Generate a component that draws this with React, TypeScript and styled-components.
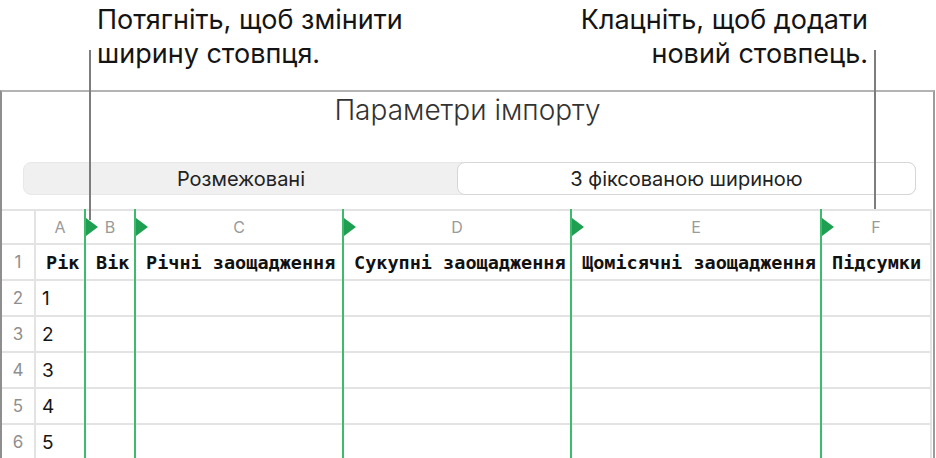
import React from 'react';
import styled, {createGlobalStyle} from "styled-components";

const GlobalStyle = createGlobalStyle`
    html, body {
        margin: 0;
        padding: 0;
        background: #ffffff;
    }
    body {
        font-family: Inter, "Noto Sans", sans-serif;
        color: #1b1b1b;
    }
`

const columns = [
    {letter: 'A', width: 48, title: 'Рік'},
    {letter: 'B', width: 48, title: 'Вік'},
    {letter: 'C', width: 206, title: 'Річні заощадження'},
    {letter: 'D', width: 226, title: 'Сукупні заощадження'},
    {letter: 'E', width: 248, title: 'Щомісячні заощадження'},
    {letter: 'F', width: 0, title: 'Підсумки'},
];
const numWidth = 32;
const lineWidth = 2;
const values = ['1', '2', '3', '4', '5'];

// x of each column break (relative to the sheet), where a green marker sits
const breaks: number[] = [];
{
    let x = numWidth + lineWidth;
    columns.slice(0, 5).forEach(c => {
        x += c.width;
        breaks.push(x);
        x += lineWidth;
    });
}

const App = () => {
    return (
        <SPage>
            <GlobalStyle/>
            <SCallouts>
                <SCallout>Потягніть, щоб змінити<br/>ширину стовпця.</SCallout>
                <SCallout $right>Клацніть, щоб додати<br/>новий стовпець.</SCallout>
            </SCallouts>
            <SPanel>
                <STitle>Параметри імпорту</STitle>
                <SSegmented>
                    <SSegment>Розмежовані</SSegment>
                    <SSegment $active>З фіксованою шириною</SSegment>
                </SSegmented>
                <SSheetWrap>
                    <SSheet $cols={`${numWidth}px ${columns.slice(0, 5).map(c => c.width + 'px').join(' ')} 1fr`}>
                        <SCorner/>
                        {columns.map(c => <SColHead key={c.letter}>{c.letter}</SColHead>)}
                        <SRowNum>1</SRowNum>
                        {columns.map(c => <SHeadCell key={c.letter}>{c.title}</SHeadCell>)}
                        {values.map((v, i) => (
                            <React.Fragment key={v}>
                                <SRowNum>{i + 2}</SRowNum>
                                <SCell>{v}</SCell>
                                {columns.slice(1).map(c => <SCell key={c.letter}/>)}
                            </React.Fragment>
                        ))}
                    </SSheet>
                    {breaks.map(x => <SMarker key={x} style={{left: x}}/>)}
                </SSheetWrap>
            </SPanel>
            <SLeader style={{left: 89, top: 50, height: 170}}/>
            <SLeader style={{left: 874, top: 50, height: 159}}/>
        </SPage>
    )
}
export default App;

const SPage = styled.div`
    position: relative;
    width: 936px;
    height: 458px;
    overflow: hidden;
`
const SCallouts = styled.div`
    display: flex;
    justify-content: space-between;
    height: 90px;
    padding: 3px 68px 0 97px;
    box-sizing: border-box;
`
const SCallout = styled.div<{ $right?: boolean }>`
    font-size: 27px;
    line-height: 34px;
    color: #141414;
    text-align: ${p => p.$right ? 'right' : 'left'};
`
const SPanel = styled.div`
    width: 935px;
    box-sizing: border-box;
    border-top: 2px solid #b3b3b3;
    border-left: 2px solid #8e8e8e;
    border-right: 2px solid #9c9c9c;
`
const STitle = styled.div`
    text-align: center;
    font-size: 28px;
    line-height: 32px;
    font-weight: 300;
    color: #333;
    padding-top: 2px;
`
const SSegmented = styled.div`
    display: grid;
    grid-template-columns: 1fr 457px;
    margin: 36px 17px 0 21px;
    height: 33px;
    box-sizing: border-box;
    background: #f0f0f0;
    border: 1px solid #e8e8e8;
    border-radius: 8px;
`
const SSegment = styled.div<{ $active?: boolean }>`
    display: flex;
    align-items: center;
    justify-content: center;
    font-size: 20px;
    color: #222;
    border-radius: 8px;
    margin: -1px;
    background: ${p => p.$active ? '#ffffff' : 'transparent'};
    border: 1px solid ${p => p.$active ? '#d6d6d6' : 'transparent'};
`
const SSheetWrap = styled.div`
    position: relative;
    margin-top: 14px;
    margin-right: 1px;
`
const SSheet = styled.div<{ $cols: string }>`
    display: grid;
    grid-template-columns: ${p => p.$cols};
    grid-template-rows: 32px;
    grid-auto-rows: 34px;
    gap: 2px;
    background: #e3e3e3;
    border-top: 2px solid #e3e3e3;
    border-right: 2px solid #e3e3e3;
`
const SCell = styled.div`
    background: #fff;
    display: flex;
    align-items: center;
    padding-left: 6px;
    font-size: 19px;
    color: #161616;
    white-space: nowrap;
    overflow: hidden;
`
const SCorner = styled.div`
    background: #fff;
`
const SColHead = styled.div`
    background: #fff;
    display: flex;
    align-items: center;
    justify-content: center;
    font-size: 16px;
    color: #9a9a9a;
`
const SRowNum = styled(SColHead)`
    font-size: 17px;
    color: #8f8f8f;
`
const SHeadCell = styled(SCell)`
    padding-left: 10px;
    font-family: "DejaVu Sans Mono", "Liberation Mono", monospace;
    font-weight: bold;
    font-size: 18.5px;
    color: #111;
`
const SMarker = styled.div`
    position: absolute;
    top: 0;
    bottom: 0;
    width: 2px;
    background: #3dba6c;

    &::after {
        content: '';
        position: absolute;
        left: 2px;
        top: 9px;
        border-left: 12px solid #1f9f52;
        border-top: 9px solid transparent;
        border-bottom: 9px solid transparent;
    }
`
const SLeader = styled.div`
    position: absolute;
    width: 2px;
    background: #7d7d7d;
`
